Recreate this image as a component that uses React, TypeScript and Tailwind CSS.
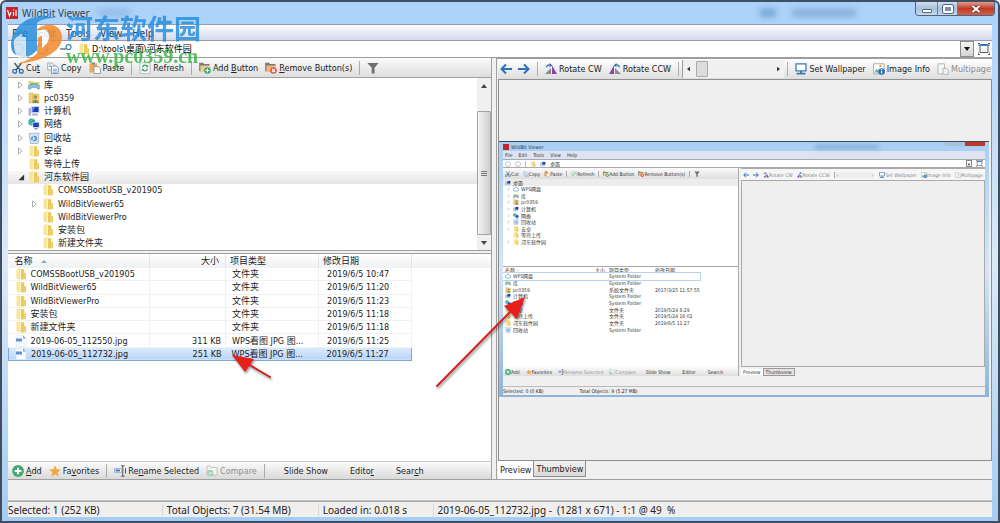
import React from 'react';

type TreeItem = {
  label: string;
  icon: string;
  nested?: boolean;
  arrow?: 'closed' | 'open';
};

type FileRow = {
  name: string;
  icon: string;
  size?: string;
  type: string;
  date?: string;
  selected?: boolean;
};

const treeItems: TreeItem[] = [
  { label: '库', icon: 'library', arrow: 'closed' },
  { label: 'pc0359', icon: 'user', arrow: 'closed' },
  { label: '计算机', icon: 'computer', arrow: 'closed' },
  { label: '网络', icon: 'network', arrow: 'closed' },
  { label: '回收站', icon: 'recycle', arrow: 'closed' },
  { label: '安卓', icon: 'folder', arrow: 'closed' },
  { label: '等待上传', icon: 'folder' },
  { label: '河东软件园', icon: 'folder', arrow: 'open' },
  { label: 'COMSSBootUSB_v201905', icon: 'folder', nested: true },
  { label: 'WildBitViewer65', icon: 'folder', nested: true, arrow: 'closed' },
  { label: 'WildBitViewerPro', icon: 'folder', nested: true },
  { label: '安装包', icon: 'folder', nested: true },
  { label: '新建文件夹', icon: 'folder', nested: true },
];

const files: FileRow[] = [
  { name: 'COMSSBootUSB_v201905', icon: 'folder', type: '文件夹', date: '2019/6/5 10:47' },
  { name: 'WildBitViewer65', icon: 'folder', type: '文件夹', date: '2019/6/5 11:20' },
  { name: 'WildBitViewerPro', icon: 'folder', type: '文件夹', date: '2019/6/5 11:23' },
  { name: '安装包', icon: 'folder', type: '文件夹', date: '2019/6/5 11:18' },
  { name: '新建文件夹', icon: 'folder', type: '文件夹', date: '2019/6/5 11:18' },
  { name: '2019-06-05_112550.jpg', icon: 'image', size: '311 KB', type: 'WPS看图 JPG 图...', date: '2019/6/5 11:25' },
  { name: '2019-06-05_112732.jpg', icon: 'image', size: '251 KB', type: 'WPS看图 JPG 图...', date: '2019/6/5 11:27', selected: true },
];

const miniTree: TreeItem[] = [
  { label: 'WPS网盘', icon: 'cloud', arrow: 'closed' },
  { label: '库', icon: 'library', arrow: 'closed' },
  { label: 'pc0359', icon: 'user', arrow: 'closed' },
  { label: '计算机', icon: 'computer', arrow: 'closed' },
  { label: '网络', icon: 'network', arrow: 'closed' },
  { label: '回收站', icon: 'recycle', arrow: 'closed' },
  { label: '安卓', icon: 'folder', arrow: 'closed' },
  { label: '等待上传', icon: 'folder' },
  { label: '河东软件园', icon: 'folder', arrow: 'closed' },
];

const miniFiles: FileRow[] = [
  { name: 'WPS网盘', icon: 'cloud', type: 'System Folder', selected: true },
  { name: '库', icon: 'library', type: 'System Folder' },
  { name: 'pc0359', icon: 'user', type: '系统文件夹', date: '2017/3/25 11:57:55' },
  { name: '计算机', icon: 'computer', type: 'System Folder' },
  { name: '网络', icon: 'network', type: 'System Folder' },
  { name: '安卓', icon: 'folder', type: '文件夹', date: '2019/5/24 8:29' },
  { name: '等待上传', icon: 'folder', type: '文件夹', date: '2019/5/24 16:02' },
  { name: '河东软件园', icon: 'folder', type: '文件夹', date: '2019/6/5 11:27' },
  { name: '回收站', icon: 'recycle', type: 'System Folder' },
];

// 12x12 glyphs shared by the toolbars, the tree and the file list
const glyphs: Record<string, React.ReactNode> = {
  folder: (
    <>
      <path d="M1.500 1 5.500.3v11.200l-4-.7z" fill="#f7e59a" />
      <path d="M5.500 1.200h3.800v3.500l1.700.8v5.700l-5.500.3z" fill="#e9c85c" />
      <path d="M5.500 1.500v9.500" stroke="#fff8d6" strokeWidth=".9" />
      <path d="M9.200 5v6" stroke="#f6e094" strokeWidth=".7" />
    </>
  ),
  library: (
    <>
      <path d="M.5 2h4l1 1h6v4H.5z" fill="#efd27c" />
      <path d="M2 4h8v3.500H2z" fill="#7fc77f" />
      <path d="M.5 6.500c3-1.500 8-1.500 11 0v3.500H9V8.500H3V10H.5z" fill="#8ebfe3" stroke="#5c93bd" strokeWidth=".5" />
    </>
  ),
  user: (
    <>
      <path d="M1 1h4v10H1zM5 2h6v9H5z" fill="#ecd27a" stroke="#cfb04c" strokeWidth=".5" />
      <circle cx="7.500" cy="5" r="1.800" fill="#b98454" />
      <path d="M4.500 11c0-4.500 6-4.500 6 0z" fill="#7b8e66" />
    </>
  ),
  computer: (
    <>
      <path d="M3 1h8.500v7H3z" fill="#c9d3e6" />
      <path d="M4 2h6.500v5H4z" fill="#1b38b5" />
      <path d="M4 2h3L5 7H4z" fill="#5c82e8" />
      <path d="M.5 3H3v7.500H.5zM4.500 8.500h5l1 2h-7z" fill="#a9b3c4" />
    </>
  ),
  network: (
    <>
      <circle cx="3.800" cy="4" r="3.500" fill="#2aa6a0" />
      <path d="M1 3.500c2 1.500 2-2 4-2M2 6c1-1 3 0 3 1" stroke="#8ce0b0" fill="none" />
      <path d="M4.500 4h7v6h-7z" fill="#cfd9ea" />
      <path d="M5.200 4.700h5.600v4.200H5.200z" fill="#1c41c0" />
      <path d="M6.500 10h3v1.500h-3z" fill="#8995ad" />
    </>
  ),
  recycle: (
    <>
      <path d="m1 1.500 10-.5-1 10.500H2.500z" fill="#d3e5f3" stroke="#8eabc4" strokeWidth=".7" />
      <circle cx="6" cy="6.500" r="2.200" fill="none" stroke="#2b78cf" strokeWidth="1.200" strokeDasharray="3.500 1.100" />
    </>
  ),
  image: (
    <>
      <path d="M1 .5h7.500L11 3v8.500H1z" fill="#f7fafe" stroke="#d6e0ee" strokeWidth=".5" />
      <path d="M1 3.500h6v3H1z" fill="#5f93d6" />
      <path d="M8 .5 11 3.500H8z" fill="#79a9e2" />
    </>
  ),
  cloud: <path d="M3 10a2.500 2.500 0 0 1 0-5 3.200 3.200 0 0 1 6-.5A2.800 2.800 0 0 1 9 10z" fill="#fff" stroke="#3b87d8" strokeWidth="1.200" />,
  cut: (
    <>
      <path d="M2.500 1 8 8M9.500 1 4 8" stroke="#4b5563" strokeWidth="1.400" />
      <circle cx="2.700" cy="9.300" r="1.900" fill="none" stroke="#2a6cb8" strokeWidth="1.300" />
      <circle cx="9.300" cy="9.300" r="1.900" fill="none" stroke="#2a6cb8" strokeWidth="1.300" />
    </>
  ),
  copy: (
    <>
      <path d="M.7 1h4.500l2 2v5H.7z" fill="#fff" stroke="#8997a8" strokeWidth=".8" />
      <path d="M4.500 4h4.800l2 2v5.500H4.500z" fill="#fff" stroke="#6e7f94" strokeWidth=".8" />
      <path d="M6 7.200h4M6 8.700h4M6 10.200h4M2 3h2M2 4.500h2" stroke="#4a88c4" strokeWidth=".7" />
    </>
  ),
  paste: (
    <>
      <path d="M.5 1.500h7.500v9H.5z" fill="#eda956" />
      <path d="M2.500.5h3.500v2H2.500z" fill="#858585" />
      <path d="M5 4.500h4.500l2 2v5H5z" fill="#fff" stroke="#8a8a8a" strokeWidth=".8" />
    </>
  ),
  refresh: (
    <>
      <path d="M1 .8h10v10.600H1z" fill="#fff" stroke="#a9a9a9" strokeWidth=".8" />
      <path d="M3.500 5.500c0-2.500 3-3 4.500-1.500M8.500 6.500c0 2.500-3 3-4.500 1.500" fill="none" stroke="#40a36e" strokeWidth="1.300" />
      <path d="M9.300 2.500v2.800H6.500zM2.700 9.500V6.700h2.800z" fill="#40a36e" />
    </>
  ),
  addButton: (
    <>
      <path d="M0 .8h4l1 1.200h5.500v2H0z" fill="#777" />
      <path d="M.5 3.500h10V10H.5z" fill="#f3c98b" />
      <path d="M0 1h1.500v8H0z" fill="#8b8b8b" />
      <circle cx="8.500" cy="8.500" r="3.300" fill="#3ea676" />
      <path d="M6.500 8.500h4M8.500 6.500v4" stroke="#fff" strokeWidth="1.100" />
    </>
  ),
  removeButton: (
    <>
      <path d="M0 .8h4l1 1.200h5.500v2H0z" fill="#777" />
      <path d="M.5 3.500h10V10H.5z" fill="#f3b873" />
      <path d="M0 1h1.500v8H0z" fill="#8b8b8b" />
      <circle cx="8.500" cy="8.500" r="3.300" fill="#dc5540" />
      <path d="m7 7 3 3M10 7l-3 3" stroke="#fff" strokeWidth="1.100" />
    </>
  ),
  filter: <path d="M.3 1h11.400L7.500 5.800v5.700H4.700V5.800z" fill="#6f6f6f" />,
  left: <path d="M6 1.500 1.500 6 6 10.500M1.500 6H12" fill="none" stroke="#2d72b8" strokeWidth="2" />,
  right: <path d="M6 1.500 10.500 6 6 10.500M10.500 6H0" fill="none" stroke="#2d72b8" strokeWidth="2" />,
  rotateCw: (
    <>
      <path d="M0 11 6 5v6z" fill="#8b8b8b" />
      <path d="M7 2.500 12 11H7z" fill="#8b3fa8" />
      <path d="M1.500 4.500C2 2 4 1.500 5.500 2.200" stroke="#2d72b8" strokeWidth="1.200" fill="none" />
      <path d="M4.500 0 7.500 2.500 4.500 4.200z" fill="#2d72b8" />
    </>
  ),
  rotateCcw: (
    <>
      <path d="M12 11 6 5v6z" fill="#8b8b8b" />
      <path d="M5 2.500 0 11h5z" fill="#8b3fa8" />
      <path d="M10.500 4.500C10 2 8 1.500 6.500 2.200" stroke="#2d72b8" strokeWidth="1.200" fill="none" />
      <path d="M7.500 0 4.500 2.500l3 1.700z" fill="#2d72b8" />
    </>
  ),
  wallpaper: (
    <>
      <path d="M1 .8h10v7H1z" fill="#fff" stroke="#3b78b8" strokeWidth="1.300" />
      <path d="M5 8h2v2H5zM1.500 9.800h9v1.700h-9z" fill="#3b78b8" />
    </>
  ),
  info: (
    <>
      <path d="M.6.8h10.500v10H.6z" fill="#fff" stroke="#999" strokeWidth=".8" />
      <circle cx="7.500" cy="3" r="1.200" fill="#efa73c" />
      <path d="m1.500 9.500 2-4 2.500 4z" fill="#63b985" />
      <circle cx="8.500" cy="8.500" r="3.300" fill="#2b6fc0" />
      <path d="M8.500 6v1M8.500 7.800v2.500" stroke="#fff" strokeWidth="1.200" />
    </>
  ),
  multipage: (
    <>
      <path d="M1 .8h6.500v10H1z" fill="#f6f6f6" stroke="#b5b5b5" />
      <path d="M6 5.500h3.500l1.800 1.800v4H6z" fill="#f6f6f6" stroke="#b5b5b5" />
    </>
  ),
  add: (
    <>
      <circle cx="6" cy="6" r="5.900" fill="#46a874" />
      <path d="M2.700 6h6.600M6 2.700v6.600" stroke="#fff" strokeWidth="1.900" />
    </>
  ),
  star: <path d="m6 .3 1.700 3.900 4.200.3-3.200 2.800 1 4.300L6 9.300l-3.700 2.300 1-4.300L.1 4.500l4.200-.3z" fill="#efaa43" />,
  rename: (
    <>
      <path d="M.5 3.500h7v4h-7z" fill="#fff" stroke="#8aa6c8" strokeWidth=".8" />
      <path d="M1.500 4.500h4.500v2H1.500z" fill="#3b78c4" />
      <path d="M7 .8h3.500M8.800 1v10M7 11.200h3.500M11.500 3v5.500" stroke="#555" strokeWidth="1" />
    </>
  ),
  compare: (
    <>
      <path d="M1 1h3l1 1.500h6V10H1z" fill="#f4f4f4" stroke="#b8b8b8" strokeWidth=".8" />
      <circle cx="4.200" cy="8" r="3.200" fill="#a3cfb5" />
      <path d="m2.700 8 1.200 1.200 2-2.200" fill="none" stroke="#fff" />
    </>
  ),
  fullscreen: (
    <>
      <path d="M2 2.500h8v7H2z" fill="#f6f9fd" stroke="#555" strokeWidth="1" />
      <path d="M1.500 2h9" stroke="#3b78c4" strokeWidth="2" />
      <path d="M0 3V.5h2M12 3V.5h-2M0 9v2.500h2M12 9v2.500h-2" fill="none" stroke="#555" strokeWidth="1" />
    </>
  ),
};

function Glyph({ name, className = 'h-3 w-3' }: { name: string; className?: string }) {
  return (
    <svg viewBox="0 0 12 12" className={`${className} shrink-0`} aria-hidden="true">
      {glyphs[name]}
    </svg>
  );
}

function ToolButton({ icon, disabled, children }: { icon?: string; disabled?: boolean; children?: React.ReactNode }) {
  return (
    <button type="button" disabled={disabled} className="flex shrink-0 items-center gap-0.5 whitespace-nowrap text-[#222] disabled:text-[#8d8d8d]">
      {icon && <Glyph name={icon} />}
      {children && <span>{children}</span>}
    </button>
  );
}

function MiniButton({ icon, disabled, children }: { icon?: string; disabled?: boolean; children?: React.ReactNode }) {
  return (
    <button type="button" disabled={disabled} className="flex shrink-0 items-center whitespace-nowrap disabled:text-[#999]">
      {icon && <Glyph name={icon} className="h-1.5 w-1.5" />}
      {children && <span>{children}</span>}
    </button>
  );
}

function Separator() {
  return <span className="h-3.5 w-px shrink-0 bg-[#ababab]" />;
}

function Twisty({ state, className }: { state?: 'closed' | 'open'; className: string }) {
  return (
    <svg viewBox="0 0 8 8" className={`${className} shrink-0`} aria-hidden="true">
      {state === 'closed' && <path d="M2 1.500v5l3-2.500z" fill="#fff" stroke="#b0b0b0" strokeWidth=".8" />}
      {state === 'open' && <path d="M6.500 2v4.500H2z" fill="#333" />}
    </svg>
  );
}

function TitleBar() {
  return (
    <header className="relative flex h-[22px] shrink-0 items-center gap-1 pl-1 text-[#39424e]">
      <svg viewBox="0 0 12 12" className="h-3 w-3" aria-hidden="true">
        <path d="M0 0h12v12H0z" fill="#c3262c" />
        <path d="m1.500 3 2 6 1.500-4M7.500 5v4M7.500 2.500v1M10 3v6" stroke="#fff" strokeWidth="1.200" fill="none" />
      </svg>
      <h1 className="font-['Noto_Sans',sans-serif] text-[10px] leading-3">WildBit Viewer</h1>
      <span className="ml-1 h-2 w-8 bg-[#6f9cc9]/40 blur-[3px]" />
      <span className="ml-auto mr-3 h-2 w-4 bg-[#3c73ad]/50 blur-[3px]" />
      <span className="mr-[142px] h-2 w-16 bg-[#5e8ab8]/50 blur-[3px]" />
      <div className="absolute right-[3px] top-0 flex h-3.5 overflow-hidden rounded-b-sm border border-t-0 border-[#4c6480]">
        <button type="button" aria-label="Minimize" className="flex w-[22px] items-center justify-center border-r border-[#6a809b] bg-linear-to-b from-[#cfdfee] via-[#a9c1da] to-[#c3d8ec]">
          <span className="mt-1 h-1 w-2.5 rounded-[1px] border border-[#59697b] bg-white" />
        </button>
        <button type="button" aria-label="Maximize" className="flex w-5 items-center justify-center border-r border-[#6a809b] bg-linear-to-b from-[#cfdfee] via-[#a9c1da] to-[#c3d8ec]">
          <span className="h-2 w-2.5 rounded-[1px] border-2 border-white bg-[#7c90a8] outline outline-[#59697b]" />
        </button>
        <button type="button" aria-label="Close" className="flex w-9 items-center justify-center bg-linear-to-b from-[#dd9d90] via-[#c03a28] to-[#d0614a]">
          <svg viewBox="0 0 10 8" className="h-2 w-2.5">
            <path d="m1.500 1 7 6M8.500 1l-7 6" stroke="#5b2a2a" strokeWidth="3.200" />
            <path d="m1.500 1 7 6M8.500 1l-7 6" stroke="#fff" strokeWidth="2" />
          </svg>
        </button>
      </div>
    </header>
  );
}

function MenuBar() {
  return (
    <nav className="flex h-4 shrink-0 items-center gap-2.5 border-t border-[#8f9eb3] bg-linear-to-b from-white via-[#e6eaf5] to-[#d2daec] px-1 font-['Noto_Sans',sans-serif] text-[10px] leading-3 text-[#2c3950]">
      <button type="button">File</button>
      <button type="button">Edit</button>
      <button type="button">Tools</button>
      <button type="button">View</button>
      <button type="button">Help</button>
    </nav>
  );
}

function AddressBar() {
  return (
    <div className="flex h-[18px] shrink-0 items-center border-y border-[#9c9c9c] bg-white">
      <button type="button" aria-label="Back" className="ml-1 h-3 w-3 rounded-full border-2 border-[#a9b9cb]" />
      <button type="button" aria-label="Forward" className="ml-3 h-3 w-3 rounded-full border-2 border-[#a9b9cb]" />
      <button type="button" aria-label="Up" className="ml-3 h-3 w-3">
        <svg viewBox="0 0 12 12" className="h-3 w-3">
          <path d="M0 6h6" stroke="#777" strokeWidth="1.500" />
          <circle cx="8.500" cy="4" r="2.500" fill="#fff" stroke="#3b78c4" strokeWidth="1.200" />
        </svg>
      </button>
      <label className="ml-1.5 flex flex-1 items-center gap-0.5">
        <Glyph name="folder" />
        <input aria-label="Address" defaultValue="D:\tools\桌面\河东软件园" className="w-full bg-transparent leading-3 text-black outline-none" />
      </label>
      <button type="button" aria-label="Show history" className="flex h-4 w-3.5 items-center justify-center border border-[#8c8c8c] bg-linear-to-b from-[#f5f5f5] to-[#d4d4d4]">
        <svg viewBox="0 0 6 4" className="h-1 w-1.5"><path d="M0 0h6L3 4z" fill="#111" /></svg>
      </button>
      <button type="button" aria-label="Full screen" className="ml-1 mr-0.5 flex h-4 w-3 items-center">
        <Glyph name="fullscreen" />
      </button>
    </div>
  );
}

function FolderTree() {
  return (
    <div className="flex h-[174px] shrink-0 border-y border-[#a0a0a0] bg-white">
      <ul className="flex min-w-0 flex-1 flex-col">
        {treeItems.map((item) => (
          <li
            key={item.label}
            className={`flex min-h-0 flex-1 items-center leading-3 ${item.arrow === 'open' ? 'bg-linear-to-b from-[#f8f8f8] to-[#e6e6e6]' : ''} ${item.nested ? 'pl-[22px]' : 'pl-2'}`}
          >
            <Twisty state={item.arrow} className="h-2.5 w-2.5" />
            <span className="ml-0.5 flex items-center gap-1">
              <Glyph name={item.icon} />
              <span className="whitespace-nowrap">{item.label}</span>
            </span>
          </li>
        ))}
      </ul>
      <div className="flex w-3.5 shrink-0 flex-col bg-[#f0f0f0]">
        <button type="button" aria-label="Scroll up" className="flex h-4 items-center justify-center">
          <svg viewBox="0 0 6 4" className="h-1 w-1.5"><path d="M0 4h6L3 0z" fill="#444" /></svg>
        </button>
        <div className="mb-px mt-[17px] flex flex-1 flex-col items-center justify-center gap-px rounded-[1px] border border-[#a3a3a3] bg-linear-to-r from-[#f4f4f4] to-[#cfcfcf]">
          <span className="h-px w-1.5 bg-[#777]" />
          <span className="h-px w-1.5 bg-[#777]" />
          <span className="h-px w-1.5 bg-[#777]" />
        </div>
        <button type="button" aria-label="Scroll down" className="flex h-3.5 items-center justify-center">
          <svg viewBox="0 0 6 4" className="h-1 w-1.5"><path d="M0 0h6L3 4z" fill="#444" /></svg>
        </button>
      </div>
    </div>
  );
}

function FileList() {
  return (
    <div className="mt-0.5 min-h-0 flex-1 overflow-hidden border-t border-[#a0a0a0] bg-white">
      <table className="h-[107px] w-full table-fixed border-collapse text-left leading-3">
        <colgroup>
          <col className="w-[141px]" />
          <col className="w-[76px]" />
          <col className="w-[93px]" />
          <col className="w-[93px]" />
          <col />
        </colgroup>
        <thead>
          <tr className="h-3.5 bg-linear-to-b from-white to-[#f0f1f3] text-[#222]">
            <th className="border-r border-[#e4e4e4] p-0 pl-1.5 font-normal">
              <span className="flex items-center gap-2">
                名称
                <svg viewBox="0 0 6 3" className="h-[3px] w-1.5"><path d="M0 3h6L3 0z" fill="#8fa9bd" /></svg>
              </span>
            </th>
            <th className="border-r border-[#e4e4e4] p-0 pr-1.5 text-right font-normal">大小</th>
            <th className="border-r border-[#e4e4e4] p-0 pl-1 font-normal">项目类型</th>
            <th className="border-r border-[#e4e4e4] p-0 pl-1 font-normal">修改日期</th>
            <th className="p-0"></th>
          </tr>
        </thead>
        <tbody>
          {files.map((file) => {
            const cell = file.selected
              ? 'whitespace-nowrap border-y border-[#7fa5d6] bg-linear-to-b from-[#dcebfc] to-[#b9d5f8] p-0 first:border-l nth-4:border-r'
              : 'whitespace-nowrap border-r border-b border-[#f1f1f1] p-0';
            return (
              <tr key={file.name}>
                <td className={cell}>
                  <span className="flex items-center gap-1 pl-1.5"><Glyph name={file.icon} />{file.name}</span>
                </td>
                <td className={`${cell} text-right`}><span className="pr-1">{file.size}</span></td>
                <td className={cell}><span className="pl-1.5">{file.type}</span></td>
                <td className={cell}><span className="pl-2">{file.date}</span></td>
                <td className="p-0"></td>
              </tr>
            );
          })}
        </tbody>
      </table>
    </div>
  );
}

function BrowserPane() {
  return (
    <section className="flex min-h-0 flex-col border-r border-[#a0a0a0]">
      <div className="flex h-[19px] shrink-0 items-center gap-[7px] overflow-hidden bg-linear-to-b from-[#fbfbfb] to-[#dedede] px-1">
        <ToolButton icon="cut">Cu<u>t</u></ToolButton>
        <ToolButton icon="copy">Copy</ToolButton>
        <ToolButton icon="paste">Paste</ToolButton>
        <Separator />
        <ToolButton icon="refresh">Refresh</ToolButton>
        <Separator />
        <ToolButton icon="addButton">Add <u>B</u>utton</ToolButton>
        <ToolButton icon="removeButton"><u>R</u>emove Button(s)</ToolButton>
        <Separator />
        <ToolButton icon="filter" />
      </div>
      <FolderTree />
      <FileList />
      <div className="flex h-[18px] shrink-0 items-center gap-[7px] overflow-hidden border-t border-[#c8c8c8] bg-linear-to-b from-[#fbfbfb] to-[#dadada] px-1">
        <ToolButton icon="add"><u>A</u>dd</ToolButton>
        <ToolButton icon="star">Fa<u>v</u>orites</ToolButton>
        <Separator />
        <ToolButton icon="rename">Re<u>n</u>ame Selected</ToolButton>
        <ToolButton icon="compare" disabled>Compare</ToolButton>
        <Separator />
        <div className="ml-3 flex gap-[22px]">
          <ToolButton>Slide Show</ToolButton>
          <ToolButton>Edito<u>r</u></ToolButton>
          <ToolButton>Sear<u>c</u>h</ToolButton>
        </div>
      </div>
    </section>
  );
}

// The previewed image is itself a capture of the application
function PreviewImage() {
  return (
    <figure className="flex h-[256px] w-full flex-col border-t border-[#3d4a5a] bg-linear-to-b from-[#a9cff5] via-[#d5e6f7] to-[#8db4dc] px-1 text-[5px] leading-[6px] text-[#333]">
      <div className="flex h-[9px] shrink-0 items-center gap-0.5">
        <span className="h-1.5 w-1.5 bg-[#c3262c]" />
        <span>WildBit Viewer</span>
        <span className="ml-auto mr-16 h-1 w-16 bg-[#5e8ab8]/50 blur-[2px]" />
        <span className="h-1 w-5 self-start bg-[#a9c1da]" />
        <span className="-ml-0.5 h-1 w-5 self-start bg-[#c03a28]" />
      </div>
      <div className="flex h-2 shrink-0 items-center gap-1.5 bg-[#dde3f1] px-0.5">
        <span>File</span><span>Edit</span><span>Tools</span><span>View</span><span>Help</span>
      </div>
      <div className="flex h-[9px] shrink-0 items-center gap-1 border-y border-[#aaa] bg-white px-0.5">
        <span className="h-1.5 w-1.5 rounded-full border border-[#bcc8d6]" />
        <span className="h-1.5 w-1.5 rounded-full border border-[#bcc8d6]" />
        <span className="h-1.5 w-px bg-[#bbb]" />
        <Glyph name="folder" className="h-1.5 w-1.5" />
        <Glyph name="computer" className="h-1.5 w-1.5" />
        <span>桌面</span>
        <span className="ml-auto flex h-[7px] w-1.5 items-center justify-center border border-[#888]">▾</span>
        <Glyph name="fullscreen" className="h-[7px] w-[7px]" />
      </div>
      <div className="grid min-h-0 flex-1 grid-cols-[238fr_246fr] gap-0.5 bg-[#f0f0f0]">
        <div className="flex min-h-0 flex-col overflow-hidden border-r border-[#aaa] bg-white">
          <div className="flex h-[11px] shrink-0 items-center gap-1 bg-linear-to-b from-[#fbfbfb] to-[#dedede] px-0.5">
            <MiniButton icon="cut">Cut</MiniButton>
            <MiniButton icon="copy">Copy</MiniButton>
            <MiniButton icon="paste">Paste</MiniButton>
            <span className="h-1.5 w-px bg-[#aaa]" />
            <MiniButton icon="refresh">Refresh</MiniButton>
            <span className="h-1.5 w-px bg-[#aaa]" />
            <MiniButton icon="addButton">Add Button</MiniButton>
            <MiniButton icon="removeButton">Remove Button(s)</MiniButton>
            <span className="h-1.5 w-px bg-[#aaa]" />
            <MiniButton icon="filter" />
          </div>
          <div className="h-[88px] shrink-0 border-b border-[#aaa]">
            <div className="flex h-[7px] items-center gap-0.5 bg-[#ececec] pl-0.5">
              <Glyph name="computer" className="h-1.5 w-1.5" />桌面
            </div>
            <ul className="flex h-[59px] flex-col">
              {miniTree.map((item) => (
                <li key={item.label} className="flex min-h-0 flex-1 items-center gap-0.5 pl-1">
                  <Twisty state={item.arrow} className="h-1 w-1" />
                  <Glyph name={item.icon} className="h-1.5 w-1.5" />
                  <span>{item.label}</span>
                </li>
              ))}
            </ul>
          </div>
          <div className="min-h-0 flex-1">
            <table className="h-[66px] w-[197px] table-fixed border-collapse text-left">
              <thead>
                <tr>
                  <th className="w-[70px] p-0 pl-0.5 font-normal">名称 -</th>
                  <th className="w-9 p-0 pr-1 text-right font-normal">大小</th>
                  <th className="w-[46px] p-0 font-normal">项目类型</th>
                  <th className="p-0 font-normal">修改日期</th>
                </tr>
              </thead>
              <tbody>
                {miniFiles.map((file) => (
                  <tr key={file.name} className={file.selected ? 'outline outline-[#b9d2ee]' : ''}>
                    <td className="p-0">
                      <span className="flex items-center gap-0.5 pl-0.5"><Glyph name={file.icon} className="h-1.5 w-1.5" />{file.name}</span>
                    </td>
                    <td className="p-0"></td>
                    <td className="whitespace-nowrap p-0">{file.type}</td>
                    <td className="whitespace-nowrap p-0">{file.date}</td>
                  </tr>
                ))}
              </tbody>
            </table>
          </div>
          <div className="flex h-[9px] shrink-0 items-center gap-1.5 bg-linear-to-b from-[#fbfbfb] to-[#dedede] px-0.5">
            <MiniButton icon="add">Add</MiniButton>
            <MiniButton icon="star">Favorites</MiniButton>
            <MiniButton icon="rename" disabled>Rename Selected</MiniButton>
            <MiniButton icon="compare" disabled>Compare</MiniButton>
            <div className="ml-1 flex gap-3">
              <MiniButton>Slide Show</MiniButton>
              <MiniButton>Editor</MiniButton>
              <MiniButton>Search</MiniButton>
            </div>
          </div>
        </div>
        <div className="flex min-h-0 min-w-0 flex-col">
          <div className="flex h-3 shrink-0 items-center gap-1 overflow-hidden border-t border-[#aaa] bg-[#f6f6f6] px-0.5 text-[#888]">
            <MiniButton icon="left" />
            <MiniButton icon="right" />
            <MiniButton icon="rotateCw">Rotate CW</MiniButton>
            <MiniButton icon="rotateCcw">Rotate CCW</MiniButton>
            <span className="flex flex-1 justify-between border-l border-[#aaa] bg-[#eee] px-0.5"><span>‹</span><span>›</span></span>
            <MiniButton icon="wallpaper">Set Wallpaper</MiniButton>
            <MiniButton icon="info">Image Info</MiniButton>
            <MiniButton icon="multipage">Multipage</MiniButton>
          </div>
          <div className="flex-1 border border-[#aaa] bg-[#efefef]" />
          <div className="flex h-[9px] shrink-0 items-center">
            <span className="bg-white px-0.5">Preview</span>
            <span className="border border-[#999] bg-[#e4e4e4] px-0.5">Thumbview</span>
          </div>
        </div>
      </div>
      <div className="h-[11px] shrink-0 border-b border-[#bbb] bg-[#f0f0f0]" />
      <div className="mb-0.5 flex h-2 shrink-0 items-center gap-9 bg-[#f1efee] text-[#222]">
        <span>Selected: 0 (0 KB)</span>
        <span>Total Objects: 9 (5.27 MB)</span>
      </div>
    </figure>
  );
}

function PreviewPane() {
  return (
    <section className="flex min-h-0 min-w-0 flex-col border-l border-t border-[#a0a0a0] bg-[#f0f0f0] pl-px">
      <div className="flex h-5 shrink-0 items-center gap-[7px] overflow-hidden bg-linear-to-b from-white to-[#dedede] pl-0.5 pr-px">
        <div className="flex gap-1.5">
          <ToolButton icon="left" />
          <ToolButton icon="right" />
        </div>
        <Separator />
        <ToolButton icon="rotateCw">Rotate CW</ToolButton>
        <ToolButton icon="rotateCcw">Rotate CCW</ToolButton>
        <Separator />
        <div className="-ml-1 flex h-[18px] min-w-0 flex-1 items-center gap-0.5 border-l border-[#999] bg-[#f0f0f0] px-1">
          <svg viewBox="0 0 4 6" className="h-1.5 w-[3px] shrink-0"><path d="M4 0v6L0 3z" fill="#333" /></svg>
          <input
            type="range"
            aria-label="Page"
            defaultValue={5}
            className="h-4 min-w-0 flex-1 appearance-none bg-transparent [&::-webkit-slider-thumb]:h-4 [&::-webkit-slider-thumb]:w-3 [&::-webkit-slider-thumb]:appearance-none [&::-webkit-slider-thumb]:rounded-[1px] [&::-webkit-slider-thumb]:border [&::-webkit-slider-thumb]:border-[#aaa] [&::-webkit-slider-thumb]:bg-[#dcdcdc]"
          />
          <svg viewBox="0 0 4 6" className="h-1.5 w-[3px] shrink-0"><path d="M0 0v6l4-3z" fill="#333" /></svg>
        </div>
        <div className="-ml-1 flex shrink-0 items-center gap-[7px]">
          <Separator />
          <ToolButton icon="wallpaper">Set Wallpaper</ToolButton>
          <ToolButton icon="info">Image Info</ToolButton>
          <ToolButton icon="multipage" disabled>Multipage</ToolButton>
        </div>
      </div>
      <div className="flex min-h-0 flex-1 items-center border border-[#8f8f8f] bg-[#efefef] pb-0.5 pr-0.5">
        <PreviewImage />
      </div>
      <div className="flex h-[18px] shrink-0 items-start">
        <button type="button" className="h-[18px] bg-white px-0.5 text-[#222]">Preview</button>
        <button type="button" className="h-4 border border-t-0 border-[#8f8f8f] bg-linear-to-b from-[#f2f2f2] to-[#d9d9d9] px-0.5 text-[#222]">Thumbview</button>
      </div>
    </section>
  );
}

function StatusBar() {
  return (
    <footer className="grid h-4 shrink-0 grid-cols-[154fr_156fr_115fr_560fr] items-center border-t border-[#a9a9a9] bg-[#f1efee] font-['Noto_Sans',sans-serif] text-[10px] leading-3 text-[#222]">
      <span>Selected: 1 (252 KB)</span>
      <span className="border-l border-[#d8d8d8] pl-1">Total Objects: 7 (31.54 MB)</span>
      <span className="border-l border-[#d8d8d8] pl-1">Loaded in: 0.018 s</span>
      <span className="whitespace-pre border-l border-[#d8d8d8] pl-1">2019-06-05_112732.jpg -  (1281 x 671) - 1:1 @ 49  %</span>
    </footer>
  );
}

function Watermark() {
  return (
    <div className="pointer-events-none absolute left-2 top-2.5 flex gap-1 opacity-85">
      <svg viewBox="0 0 52 52" className="h-[52px] w-[52px]" aria-hidden="true">
        <path d="M1 33C2 13 20-1 47 6 36 6 30 8 27 11v27c-5 6-12 9-18 6C3 42 1 38 1 33z" fill="#2b8fdc" />
        <path d="M4 28c3-4 8-7 13-8v28h-5c-6-2-9-11-8-20z" fill="#fff" opacity=".75" />
        <path d="M12 21l15-8v24c-4 5-8 7-11 7V25h-4z" fill="#2b8fdc" />
        <path d="M26 18C38 8 52 13 52 25c0 14-17 24-45 27 11-4 17-7 21-12V20z" fill="#f08a2c" />
        <path d="M27 19c5-2 9-2 11 1 3 5 0 12-6 16V24l-5 2z" fill="#fff" />
      </svg>
      <div className="flex flex-col whitespace-nowrap">
        <span className="font-['Noto_Sans_CJK_SC',sans-serif] text-[27px] font-bold leading-8 text-[#2b8fe0]">河东软件园</span>
        <span className="font-['Liberation_Serif',serif] text-[20px] font-bold leading-6 text-[#3fb54a]">www.pc0359.cn</span>
      </div>
    </div>
  );
}

function Arrows() {
  return (
    <svg width="1000" height="523" className="pointer-events-none absolute -left-0.5 -top-0.5 drop-shadow-[1px_2px_1px_rgba(0,0,0,0.4)]" aria-hidden="true">
      <path d="M437 386 512 310M270 377 248 364" stroke="#d3201f" strokeWidth="2" strokeLinecap="round" />
      <path d="m525 297-8 22-13-13zM232 355l22 4-9 13z" fill="#e8201c" />
    </svg>
  );
}

export default function App() {
  return (
    <div className="relative flex h-screen min-h-[480px] flex-col overflow-hidden rounded-t-md border-2 border-[#3f4e60] bg-linear-to-b from-[#abd2fa] via-[#dbe9f6] to-[#a5cdf2] font-['DejaVu_Sans_Condensed','Noto_Sans_CJK_SC',sans-serif] text-[9px] leading-3 text-[#1c1c1c]">
      <TitleBar />
      <main className="mx-1.5 mb-1 flex min-h-0 flex-1 flex-col bg-[#f0f0f0]">
        <MenuBar />
        <AddressBar />
        <div className="grid min-h-0 flex-1 grid-cols-[484fr_496fr] gap-1">
          <BrowserPane />
          <PreviewPane />
        </div>
        <div className="h-[22px] shrink-0 border-y border-b-[#c4c4c4] border-t-[#a0a0a0]" />
        <StatusBar />
      </main>
      <Watermark />
      <Arrows />
    </div>
  );
}
